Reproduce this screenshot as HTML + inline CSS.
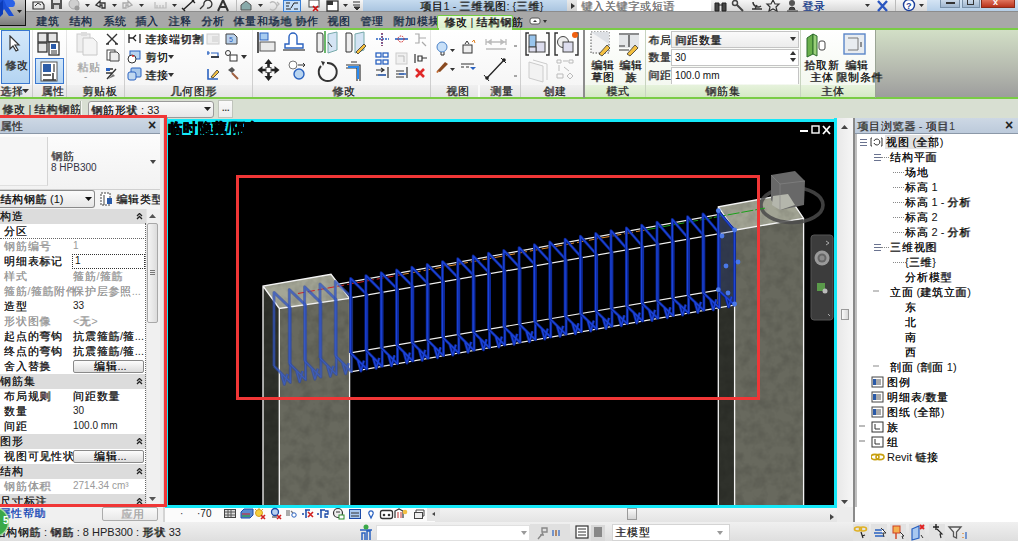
<!DOCTYPE html>
<html><head><meta charset="utf-8">
<style>
*{box-sizing:border-box;margin:0;padding:0}
html,body{width:1018px;height:541px;overflow:hidden;background:#d4d4d4;font-family:"Liberation Sans",sans-serif;font-size:11px;color:#1a1a1a;position:relative}
.a{position:absolute}
.t{position:absolute;white-space:nowrap;line-height:1}
.c{letter-spacing:.75px;text-shadow:.6px .4px 0 currentColor}
.l .c{text-shadow:.4px .3px 0 currentColor}
</style></head><body>
<div class="a" style="left:0px;top:0px;width:363px;height:12px;background:linear-gradient(#f7f7f7,#d6d6d6)"></div>
<div class="a" style="left:363px;top:0px;width:204px;height:12px;background:linear-gradient(#c6dbef,#a8c3df)"></div>
<div class="a" style="left:567px;top:0px;width:10px;height:12px;background:linear-gradient(#eaeaea,#cfcfcf)"></div>
<div class="a" style="left:577px;top:0px;width:134px;height:12px;background:#fff;border-bottom:1px solid #9a9a9a"></div>
<div class="a" style="left:711px;top:0px;width:217px;height:12px;background:linear-gradient(#f6f6f6,#d6d6d6)"></div>
<div class="a" style="left:927px;top:0px;width:91px;height:12px;background:linear-gradient(#d4e4f4,#b2cce6)"></div>
<div class="a" style="left:0px;top:11px;width:1018px;height:1px;background:#8c8c8c"></div>
<div class="t" style="left:420px;top:1px;font-size:11px;color:#222;"><span class="c">项目</span>1 - <span class="c">三维视图</span>: {<span class="c">三维</span>}</div>
<svg class="a" style="left:569px;top:2px;" width="8" height="8" viewBox="0 0 8 8"><path d="M2 1l4 3-4 3z" fill="#333"/></svg>
<div class="t" style="left:581px;top:1px;font-size:11px;color:#777;"><span class="c">键入关键字或短语</span></div>
<div class="a" style="left:940px;top:0px;width:20px;height:8px;background:linear-gradient(#c9d8e8,#9fb6cf);border:1px solid #7890a8;border-top:0"></div>
<div class="a" style="left:962px;top:0px;width:18px;height:8px;background:linear-gradient(#c9d8e8,#9fb6cf);border:1px solid #7890a8;border-top:0"></div>
<div class="a" style="left:981px;top:0px;width:34px;height:8px;background:linear-gradient(#e0735c,#b8321c);border:1px solid #8a2a18;border-top:0"></div>
<div class="a" style="left:946px;top:2px;width:9px;height:2px;background:#333"></div>
<div class="a" style="left:967px;top:0px;width:7px;height:5px;border:1px solid #333;border-top:0"></div>
<div class="t" style="left:993px;top:-2px;font-size:9px;color:#fff;font-weight:bold">x</div>
<svg class="a" style="left:0px;top:0px;" width="363" height="12" viewBox="0 0 363 12"><path d="M33 2h9l2 3v4h-11z" fill="none" stroke="#333" stroke-width="1.2"/><path d="M35 6l3-3 3 2" stroke="#333" fill="none"/><rect x="51" y="0" width="11" height="9" fill="#555"/><rect x="53" y="0" width="7" height="3" fill="#ddd"/><rect x="54" y="5" width="5" height="4" fill="#ccc"/><circle cx="74" cy="4" r="5" fill="#cfcfcf" stroke="#aaa"/><circle cx="77" cy="8" r="2.5" fill="#999"/><path d="M96 5l4-4v2h5v5h-3v-3h-2v2z" fill="none" stroke="#333" stroke-width="1.3"/><path d="M132 5l-4-4v2h-5v5h3v-3h2v2z" fill="none" stroke="#aaa" stroke-width="1.3"/><path d="M155 2v6h11v-6M157 8v-3M160 8v-3M163 8v-3" fill="none" stroke="#bbb" stroke-width="1.2"/><path d="M183 10l11-10M182 8l3 3M192 0l3 3" fill="none" stroke="#222" stroke-width="1.4"/><path d="M200 9l4-4M204 5a4 4 0 1 1 3 3" fill="none" stroke="#333" stroke-width="1.3"/><path d="M218 11l5-11 5 11M220 7h6" fill="none" stroke="#333" stroke-width="2"/><rect x="236" y="0" width="1" height="11" fill="#bbb"/><path d="M241 5l5-4 5 4v5h-10z" fill="#8aa" stroke="#555"/><path d="M270 3a4 4 0 1 1 0 6M277 2l2 2-2 2" fill="none" stroke="#bbb" stroke-width="1.3"/><rect x="283.5" y="0.5" width="17" height="11" fill="#c6def6" stroke="#3b7fd4"/><path d="M286 3h4M286 6h3M286 9h5M291 8l3-5h4M294 9h4" stroke="#222" fill="none"/><rect x="309" y="0" width="10" height="7" fill="#fff" stroke="#444"/><path d="M313 6l5 5M318 6l-5 5" stroke="#d01010" stroke-width="1.6"/><rect x="327" y="1" width="11" height="10" fill="#fff" stroke="#333" stroke-width="1.3"/><rect x="327" y="1" width="6" height="4" fill="#333"/><path d="M353 2h7M353 5h7M354 7l3 3 3-3z" fill="#333" stroke="#333"/><path d="M85 4h5l-2.5 3z" fill="#333"/><path d="M112 4h5l-2.5 3z" fill="#333"/><path d="M139 4h5l-2.5 3z" fill="#333"/><path d="M172 4h5l-2.5 3z" fill="#333"/><path d="M258 4h5l-2.5 3z" fill="#333"/><path d="M343 4h5l-2.5 3z" fill="#333"/></svg>
<svg class="a" style="left:0px;top:0px;" width="1018" height="12" viewBox="0 0 1018 12"><path d="M715 3h4v8h-4zM722 3h4v8h-4zM718 5h5" fill="#444" stroke="#222"/><circle cx="735" cy="3" r="2.5" fill="none" stroke="#444" stroke-width="1.5"/><path d="M737 5l6 6" stroke="#444" stroke-width="2"/><path d="M752 9h10M755 9l2-4M753 2a5 5 0 0 0 8 4" fill="none" stroke="#333" stroke-width="1.4"/><path d="M773 0l2 4h4l-3 3 1 4-4-2-4 2 1-4-3-3h4z" fill="none" stroke="#333" stroke-width="1.2"/><circle cx="792" cy="3" r="3" fill="#555"/><path d="M787 11h11M789 10a3 3 0 0 1 6 0" fill="#444" stroke="#333"/><path d="M865 4h5l-2.5 3zM919 4h5l-2.5 3z" fill="#333"/><path d="M878 1l9 10M887 1l-9 10" stroke="#2b56c0" stroke-width="2.4"/><rect x="895" y="0" width="1" height="11" fill="#bbb"/><circle cx="909" cy="5" r="5.5" fill="#fff" stroke="#1c3f9a" stroke-width="1.4"/><text x="906" y="9" font-size="9" font-weight="bold" fill="#1c3f9a" font-family="Liberation Sans">?</text></svg>
<div class="t" style="left:802px;top:1px;font-size:11px;color:#1d3f8a;"><span class="c">登录</span></div>
<div class="a" style="left:0px;top:12px;width:1018px;height:16px;background:#a8a8a8"></div>
<div class="t" style="left:36px;top:16px;font-size:11px;color:#20304a;"><span class="c">建筑</span></div>
<div class="t" style="left:69px;top:16px;font-size:11px;color:#20304a;"><span class="c">结构</span></div>
<div class="t" style="left:103px;top:16px;font-size:11px;color:#20304a;"><span class="c">系统</span></div>
<div class="t" style="left:135px;top:16px;font-size:11px;color:#20304a;"><span class="c">插入</span></div>
<div class="t" style="left:168px;top:16px;font-size:11px;color:#20304a;"><span class="c">注释</span></div>
<div class="t" style="left:201px;top:16px;font-size:11px;color:#20304a;"><span class="c">分析</span></div>
<div class="t" style="left:233px;top:16px;font-size:11px;color:#20304a;"><span class="c">体量和场地</span></div>
<div class="t" style="left:295px;top:16px;font-size:11px;color:#20304a;"><span class="c">协作</span></div>
<div class="t" style="left:327px;top:16px;font-size:11px;color:#20304a;"><span class="c">视图</span></div>
<div class="t" style="left:360px;top:16px;font-size:11px;color:#20304a;"><span class="c">管理</span></div>
<div class="t" style="left:393px;top:16px;font-size:11px;color:#20304a;"><span class="c">附加模块</span></div>
<div class="a" style="left:437px;top:15px;width:76px;height:14px;background:linear-gradient(#eef8e6,#daf0ca);border:1.5px solid #72d040;border-bottom:0;border-radius:2px 2px 0 0"></div>
<div class="t" style="left:444px;top:17px;font-size:11px;color:#1a1a1a;"><span class="c">修改</span> | <span class="c">结构钢筋</span></div>
<svg class="a" style="left:528px;top:15px;" width="20" height="12" viewBox="0 0 20 12"><rect x="2" y="3" width="10" height="6" rx="2" fill="#fff" stroke="#555"/><path d="M5 7l2-2 2 2z" fill="#333"/><path d="M15 5h4l-2 3z" fill="#333"/></svg>
<div class="a" style="left:0px;top:0px;width:26px;height:26px;background:linear-gradient(#c8c8c8,#a0a0a0 60%,#7c7c7c);border-right:1.5px solid #111;border-bottom:1.5px solid #111"></div>
<svg class="a" style="left:0px;top:0px;" width="25" height="25" viewBox="0 0 25 25"><path d="M0 0h9l-2 5 7 11h-5l-5-7-2 4h-2z" fill="#1a4fd6"/><path d="M4 0h9a4 4 0 0 1 0 7h-6" fill="#2a62e8"/><path d="M0 3l3-3v14l-3 3z" fill="#0c3cb8"/><path d="M17 10h5l-2.5 3z" fill="#222"/></svg>
<div class="a" style="left:0px;top:28px;width:1018px;height:2px;background:#79cc45"></div>
<div class="a" style="left:438.5px;top:28px;width:73px;height:2px;background:#e2f4d6"></div>
<div class="a" style="left:0px;top:30px;width:584px;height:55px;background:linear-gradient(#ffffff,#f6f6f6)"></div>
<div class="a" style="left:584px;top:30px;width:292px;height:55px;background:linear-gradient(#ffffff,#f4f8f0)"></div>
<div class="a" style="left:0px;top:85px;width:584px;height:13px;background:linear-gradient(#f0f0f0,#e4e4e4)"></div>
<div class="a" style="left:584px;top:85px;width:292px;height:13px;background:linear-gradient(#e6f2dc,#d4e8c4)"></div>
<div class="a" style="left:876px;top:30px;width:142px;height:68px;background:linear-gradient(#d2dfc6,#b4b8ae 60%,#9c9c9c)"></div>
<div class="a" style="left:0px;top:97px;width:1018px;height:2px;background:#79cc45"></div>
<div class="a" style="left:32px;top:30px;width:1px;height:67px;background:linear-gradient(#e8e8e8,#c8c8c8)"></div>
<div class="a" style="left:66px;top:30px;width:1px;height:67px;background:linear-gradient(#e8e8e8,#c8c8c8)"></div>
<div class="a" style="left:124px;top:30px;width:1px;height:67px;background:linear-gradient(#e8e8e8,#c8c8c8)"></div>
<div class="a" style="left:252px;top:30px;width:1px;height:67px;background:linear-gradient(#e8e8e8,#c8c8c8)"></div>
<div class="a" style="left:430px;top:30px;width:1px;height:67px;background:linear-gradient(#e8e8e8,#c8c8c8)"></div>
<div class="a" style="left:520px;top:30px;width:1px;height:67px;background:linear-gradient(#e8e8e8,#c8c8c8)"></div>
<div class="a" style="left:478px;top:85px;width:2px;height:12px;background:#fafafa"></div>
<div class="a" style="left:583px;top:30px;width:2px;height:68px;background:#8c8c8c"></div>
<div class="a" style="left:645px;top:30px;width:1px;height:67px;background:#c8d4c0"></div>
<div class="a" style="left:800px;top:30px;width:1px;height:67px;background:#c8d4c0"></div>
<div class="a" style="left:875px;top:30px;width:1px;height:68px;background:#9aa494"></div>
<div class="t" style="left:0px;top:86px;font-size:11px;color:#333;"><span class="c">选择</span></div>
<div class="t" style="left:41px;top:86px;font-size:11px;color:#333;"><span class="c">属性</span></div>
<div class="t" style="left:82px;top:86px;font-size:11px;color:#333;"><span class="c">剪贴板</span></div>
<div class="t" style="left:170px;top:86px;font-size:11px;color:#333;"><span class="c">几何图形</span></div>
<div class="t" style="left:332px;top:86px;font-size:11px;color:#333;"><span class="c">修改</span></div>
<div class="t" style="left:446px;top:86px;font-size:11px;color:#333;"><span class="c">视图</span></div>
<div class="t" style="left:490px;top:86px;font-size:11px;color:#333;"><span class="c">测量</span></div>
<div class="t" style="left:543px;top:86px;font-size:11px;color:#333;"><span class="c">创建</span></div>
<div class="t" style="left:606px;top:86px;font-size:11px;color:#333;"><span class="c">模式</span></div>
<div class="t" style="left:705px;top:86px;font-size:11px;color:#333;"><span class="c">钢筋集</span></div>
<div class="t" style="left:821px;top:86px;font-size:11px;color:#333;"><span class="c">主体</span></div>
<svg class="a" style="left:22px;top:89px;" width="8" height="5" viewBox="0 0 8 5"><path d="M0 0h7l-3.5 4z" fill="#333"/></svg>
<div class="a" style="left:1px;top:30px;width:29px;height:54px;background:linear-gradient(#d4e8fa,#b4d4f2);border:1px solid #3a78d0"></div>
<svg class="a" style="left:9px;top:35px;" width="12" height="17" viewBox="0 0 12 17"><path d="M1 1v13l3-3 3 5 2-1-3-5h4z" fill="#fff" stroke="#333" stroke-width="1.2"/></svg>
<div class="t" style="left:5px;top:60px;font-size:11px;color:#333;"><span class="c">修改</span></div>
<svg class="a" style="left:36px;top:31px;" width="26" height="25" viewBox="0 0 26 25"><rect x="2" y="2" width="9" height="9" fill="#e4e4e4" stroke="#333" stroke-width="1.3"/><rect x="12" y="2" width="9" height="9" fill="#e4e4e4" stroke="#333" stroke-width="1.3"/><rect x="2" y="12" width="9" height="9" fill="#e4e4e4" stroke="#333" stroke-width="1.3"/><rect x="13" y="11" width="10" height="13" fill="#fff" stroke="#333" stroke-width="1.3"/><rect x="15" y="13" width="5" height="5" fill="#2a5aa8"/><path d="M15 20h6M15 22h6" stroke="#333"/></svg>
<div class="a" style="left:35px;top:58px;width:29px;height:26px;background:linear-gradient(#d4e8fa,#b4d4f2);border:1px solid #3a78d0"></div>
<svg class="a" style="left:40px;top:61px;" width="20" height="21" viewBox="0 0 20 21"><rect x="1" y="1" width="16" height="19" fill="#fff" stroke="#555"/><rect x="3" y="3" width="8" height="8" fill="#2d5da8"/><rect x="13" y="3" width="2" height="8" fill="#888"/><path d="M3 14h8M13 12v7M3 19h13" stroke="#333" stroke-width="1.5"/></svg>
<svg class="a" style="left:74px;top:31px;" width="26" height="26" viewBox="0 0 26 26"><rect x="3" y="3" width="13" height="18" fill="#eee" stroke="#ccc"/><path d="M9 7h10l4 4v13h-14z" fill="#f4f4f4" stroke="#c8c8c8"/><rect x="7" y="1" width="6" height="4" fill="#ddd"/></svg>
<div class="t" style="left:77px;top:62px;font-size:11px;color:#aaa;"><span class="c">粘贴</span></div>
<div class="t" style="left:84px;top:72px;font-size:10px;color:#999;">-</div>
<svg class="a" style="left:104px;top:32px;" width="18" height="50" viewBox="0 0 18 50"><path d="M3 2l10 10M13 2l-10 10M2 12h3M11 12h3" stroke="#333" stroke-width="1.4"/><rect x="3" y="18" width="8" height="10" fill="#fff" stroke="#444"/><path d="M6 20h7l2 2v7h-9z" fill="#eee" stroke="#444"/><path d="M2 37h7M2 41h6M3 47l9-10" stroke="#333" stroke-width="1.3"/><path d="M4 47l5-5 2 2z" fill="#777"/><path d="M2 36h4v3h-4z" fill="#2a62c0"/></svg>
<svg class="a" style="left:127px;top:32px;" width="16" height="50" viewBox="0 0 16 50"><path d="M2 2v9M13 2v9M2 6h4l3 3M9 3l-3 3" stroke="#222" stroke-width="1.3" fill="none"/><rect x="3" y="19" width="10" height="8" fill="#b8d4f0" stroke="#2a62c0"/><circle cx="5" cy="27" r="4" fill="#fff" stroke="#333"/><circle cx="6" cy="24" r="1" fill="#e02020"/><rect x="4" y="36" width="10" height="9" fill="#a8c8ea" stroke="#2a62c0" rx="1"/><rect x="1" y="40" width="8" height="8" fill="#c0d8f0" stroke="#2a62c0" rx="2"/></svg>
<div class="t" style="left:145px;top:34px;font-size:11px;color:#202020;"><span class="c">连接端切割</span></div>
<div class="t" style="left:145px;top:52px;font-size:11px;color:#202020;"><span class="c">剪切</span></div>
<div class="t" style="left:145px;top:70px;font-size:11px;color:#202020;"><span class="c">连接</span></div>
<svg class="a" style="left:195px;top:37px;" width="7" height="5" viewBox="0 0 7 5"><path d="M0 0h6l-3 4z" fill="#333"/></svg>
<svg class="a" style="left:168px;top:55px;" width="7" height="5" viewBox="0 0 7 5"><path d="M0 0h6l-3 4z" fill="#333"/></svg>
<svg class="a" style="left:168px;top:73px;" width="7" height="5" viewBox="0 0 7 5"><path d="M0 0h6l-3 4z" fill="#333"/></svg>
<svg class="a" style="left:241px;top:55px;" width="7" height="5" viewBox="0 0 7 5"><path d="M0 0h6l-3 4z" fill="#333"/></svg>
<svg class="a" style="left:204px;top:32px;" width="36" height="50" viewBox="0 0 36 50"><rect x="3" y="2" width="12" height="10" fill="#eee" stroke="#ccc"/><rect x="8" y="4" width="6" height="6" fill="#ddd"/><path d="M22 2h8l3 3v7h-11z" fill="#b8d0ea" stroke="#444"/><text x="25" y="10" font-size="7" fill="#2a62c0" font-family="Liberation Sans">5</text><path d="M3 21h3M4 19v4M7 21h7v4h-7" stroke="#2a62c0" stroke-width="1.2" fill="none"/><path d="M7 25h8" stroke="#222" stroke-width="1.6"/><circle cx="24" cy="21" r="2.5" fill="none" stroke="#333"/><rect x="26" y="23" width="7" height="6" fill="#fff" stroke="#333"/><path d="M4 37v10h10" stroke="#2a62c0" stroke-width="1.6" fill="none"/><path d="M7 45l6-7 2 2-6 6z" fill="#f4c040" stroke="#333" stroke-width=".8"/><path d="M24 38l4-3 3 3-3 3z" fill="#555"/><path d="M28 41l6 6" stroke="#a06040" stroke-width="2"/></svg>
<svg class="a" style="left:252px;top:30px;" width="178" height="54" viewBox="0 0 178 54"><path d="M6 2v21" stroke="#111" stroke-width="1.4"/><rect x="8" y="3" width="8" height="7" fill="#a8ccf0" stroke="#2a62c0"/><rect x="8" y="12" width="15" height="9" fill="#eaeaea" stroke="#555"/><path d="M33 18v-4h4v-7a4 4 0 0 1 8 0v7h6v4z" fill="#fff" stroke="#2a62c0" stroke-width="1.4"/><path d="M31 20h22" stroke="#333" stroke-width="1.2"/><path d="M65 3h4a2 2 0 0 1 2 2v15a2 2 0 0 1-2 2h-4z" fill="#eee" stroke="#333"/><path d="M73 1v22" stroke="#2a9a2a" stroke-width="1.4"/><path d="M76 4l9-2v18l-9 3z" fill="#d4e4f4" stroke="#7aa"/><path d="M76 12l4 5" stroke="#333"/><path d="M94 3h4a2 2 0 0 1 2 2v15a2 2 0 0 1-2 2h-4z" fill="#eee" stroke="#333"/><path d="M103 4l9-2v18l-9 3z" fill="#d4e4f4" stroke="#7aa"/><path d="M104 22l8-8 2 2-8 8z" fill="#f4c040" stroke="#333" stroke-width=".8"/><path d="M16.5 33v5M16.5 42v5M9 40h5M19 40h5" stroke="#222" stroke-width="2.6"/><path d="M16.5 29l-4 5h8zM16.5 51l-4-5h8zM5.5 40l5-4v8zM27.5 40l-5-4v8z" fill="#222"/><rect x="14" y="37.5" width="5" height="5" fill="#fff" stroke="#555"/><circle cx="41" cy="35" r="4" fill="#fff" stroke="#777"/><path d="M46 35h7M51 33l2 2-2 2" stroke="#333" fill="none"/><ellipse cx="47" cy="44" rx="5" ry="5" fill="#b8d4f0" stroke="#2a62c0" stroke-width="1.4"/><path d="M75 33a9 9 0 1 1-6 3" fill="none" stroke="#333" stroke-width="2"/><path d="M69 31l4 1-2 4z" fill="#333"/><path d="M94 35h14v16M94 38h11v13M99 32h6" stroke="#333" stroke-width="1.2" fill="none"/><path d="M96 37h10v12" stroke="#2a8af0" stroke-width="2" fill="none"/><path d="M124 9h13M130 3v13" stroke="#2a62c0" stroke-width="1.6" stroke-dasharray="2 1"/><path d="M130 3v13" stroke="#d02020" stroke-dasharray="1.5 1.5"/><path d="M143 9h13" stroke="#2a62c0" stroke-width="1.6"/><circle cx="149" cy="9" r="3" fill="none" stroke="#d02020" stroke-dasharray="1.5 1"/><path d="M163 4h4v9h-4M167 8h7M170 12l4 4" stroke="#aaa" stroke-width="1.2" fill="none"/><rect x="124" y="23" width="5" height="4" fill="none" stroke="#2a62c0" stroke-width="1.3"/><rect x="131" y="23" width="5" height="4" fill="none" stroke="#2a62c0" stroke-width="1.3"/><rect x="124" y="30" width="5" height="4" fill="none" stroke="#2a62c0" stroke-width="1.3"/><rect x="131" y="30" width="5" height="4" fill="none" stroke="#2a62c0" stroke-width="1.3"/><rect x="144" y="23" width="11" height="11" fill="#f0f0f0" stroke="#ccc"/><path d="M146 26h6v6" stroke="#bbb" fill="none"/><path d="M163 24v9M166 26h4v5h-4zM170 28h5" stroke="#333" stroke-width="1.2" fill="none"/><path d="M124 40h8M129 38l3 2-3 2M124 45h10M136 37v11" stroke="#333" stroke-width="1.2" fill="none"/><path d="M126 45h8" stroke="#2a62c0" stroke-width="1.4"/><path d="M144 41h8M144 44h8M144 47h8M155 37v11" stroke="#333" stroke-width="1.2" fill="none"/><path d="M147 44h7" stroke="#2a62c0" stroke-width="1.4"/><path d="M164 39l8 8M172 39l-8 8" stroke="#e02828" stroke-width="2.6"/></svg>
<svg class="a" style="left:430px;top:30px;" width="50" height="54" viewBox="0 0 50 54"><circle cx="12" cy="17" r="5" fill="#c8e0f8" stroke="#4a82c8"/><path d="M11 22v3h3v-3" stroke="#333" fill="none"/><path d="M20 19h5l-2.5 3zM20 38h5l-2.5 3z" fill="#333"/><rect x="33" y="15" width="9" height="8" fill="#eee" stroke="#333"/><path d="M35 14l2-3 2 3" stroke="#333" fill="none"/><path d="M42 12l2-2 1 3" stroke="#e08020" fill="none"/><path d="M7 41l8-9 3 2-8 8z" fill="#8a4a20"/><path d="M6 42l3-2-1 3z" fill="#c06020"/><path d="M31 34h13M31 37h3M36 37h3" stroke="#333" stroke-width="1.2"/><path d="M40 37l3 3 3-3z" fill="#2a62c0"/></svg>
<svg class="a" style="left:478px;top:30px;" width="42" height="54" viewBox="0 0 42 54"><path d="M8 12h20M8 9v6M28 9v6M10 12l3-2v4zM26 12l-3-2v4z" stroke="#bbb" stroke-width="1.3" fill="#bbb"/><rect x="8" y="18" width="20" height="2" fill="#ccc"/><path d="M36 16h3M36 46h3" stroke="#555"/><path d="M9 48l17-18" stroke="#222" stroke-width="1.3"/><circle cx="9" cy="48" r="1.8" fill="#222"/><circle cx="26" cy="30" r="1.8" fill="#222"/><path d="M6 45l5 6M23 28l5 5" stroke="#222"/></svg>
<svg class="a" style="left:520px;top:30px;" width="64" height="54" viewBox="0 0 64 54"><path d="M9 3h-3v22h3M26 3h3v22h-3M38 3h-3v22h3M55 3h3v22h-3" stroke="#333" stroke-width="1.4" fill="none"/><rect x="9" y="5" width="7" height="12" fill="#98c4ec" stroke="#444"/><rect x="16" y="12" width="9" height="10" fill="#dde" stroke="#444"/><rect x="9" y="17" width="7" height="5" fill="#dde" stroke="#444"/><circle cx="43" cy="12" r="5.5" fill="#eee" stroke="#444"/><rect x="43" y="12" width="10" height="10" fill="#dde" stroke="#444"/><circle cx="55" cy="5" r="3" fill="#f06010"/><path d="M9 32l14 4v16l-14-4z" fill="#f2f2f2" stroke="#ccc"/><path d="M13 30l14 4v16" fill="none" stroke="#ccc"/><path d="M37 30h4v3h-4zM49 30h4v3h-4zM37 44h6v4h-6zM43 31h5M39 35v6M44 37l5 4" stroke="#bbb" fill="none"/><path d="M50 43l3 3-3 3-3-3z" fill="none" stroke="#bbb"/></svg>
<svg class="a" style="left:585px;top:30px;" width="60" height="30" viewBox="0 0 60 30"><rect x="6" y="2" width="18" height="21" fill="#f4f4f4" stroke="#555" stroke-dasharray="1.5 1.5"/><path d="M6 2h18v12" fill="#dde0e4"/><path d="M14 24l8-9 3 3-8 8z" fill="#f4c040" stroke="#333" stroke-width=".8"/><rect x="34" y="3" width="20" height="15" fill="#e4e6e8"/><path d="M34 4h20M34 16h6M34 20h10M44 5v12" stroke="#333" stroke-width="1.2"/><path d="M42 24l8-9 3 3-8 8z" fill="#f4c040" stroke="#333" stroke-width=".8"/></svg>
<div class="t" style="left:591px;top:60px;font-size:11px;color:#202020;"><span class="c">编辑</span></div>
<div class="t" style="left:591px;top:72px;font-size:11px;color:#202020;"><span class="c">草图</span></div>
<div class="t" style="left:619px;top:60px;font-size:11px;color:#202020;"><span class="c">编辑</span></div>
<div class="t" style="left:625px;top:72px;font-size:11px;color:#202020;"><span class="c">族</span></div>
<div class="t" style="left:648px;top:35px;font-size:11px;color:#333;"><span class="c">布局</span>:</div>
<div class="t" style="left:648px;top:52px;font-size:11px;color:#333;"><span class="c">数量</span>:</div>
<div class="t" style="left:648px;top:70px;font-size:11px;color:#333;"><span class="c">间距</span>:</div>
<div class="a" style="left:671px;top:31px;width:128px;height:17px;background:linear-gradient(#fafafa,#ececec);border:1px solid #c4c4c4"></div>
<div class="t" style="left:675px;top:35px;font-size:11px;color:#202020;"><span class="c">间距数量</span></div>
<svg class="a" style="left:790px;top:37px;" width="7" height="5" viewBox="0 0 7 5"><path d="M0 0h6l-3 4z" fill="#333"/></svg>
<div class="a" style="left:671px;top:49px;width:128px;height:17px;background:#fff;border:1px solid #c4c4c4"></div>
<div class="t" style="left:675px;top:53px;font-size:10px;color:#111;">30</div>
<svg class="a" style="left:789px;top:50px;" width="9" height="14" viewBox="0 0 9 14"><path d="M1 5h6l-3-4zM1 8h6l-3 4z" fill="#333"/></svg>
<div class="a" style="left:671px;top:67px;width:128px;height:17px;background:#fff;border:1px solid #c4c4c4;border-bottom:0"></div>
<div class="t" style="left:675px;top:71px;font-size:10px;color:#111;">100.0 mm</div>
<svg class="a" style="left:803px;top:30px;" width="72" height="30" viewBox="0 0 72 30"><path d="M4 8l6-4v20l-6 3z" fill="#6ab04c" stroke="#2a6a2a"/><path d="M10 4l4 2v20l-4-2z" fill="#9ad07a" stroke="#2a6a2a"/><rect x="16" y="11" width="6" height="9" rx="2" fill="#fff" stroke="#444"/><rect x="41" y="4" width="21" height="20" fill="#e8ecf0" stroke="#5a86c8" stroke-width="1.4"/><path d="M45 8l10 0v12h-10" fill="none" stroke="#777"/><path d="M58 12v5" stroke="#333"/></svg>
<div class="t" style="left:804px;top:60px;font-size:11px;color:#202020;"><span class="c">拾取新</span></div>
<div class="t" style="left:810px;top:72px;font-size:11px;color:#202020;"><span class="c">主体</span></div>
<div class="t" style="left:845px;top:60px;font-size:11px;color:#202020;"><span class="c">编辑</span></div>
<div class="t" style="left:836px;top:72px;font-size:11px;color:#202020;"><span class="c">限制条件</span></div>
<div class="a" style="left:0px;top:99px;width:1018px;height:20px;background:#d8dfd2"></div>
<div class="t" style="left:2px;top:104px;font-size:11px;color:#2a2a2a;"><span class="c">修改</span> | <span class="c">结构钢筋</span></div>
<div class="a" style="left:80px;top:101px;width:1px;height:15px;background:#a8b0a4"></div>
<div class="a" style="left:81px;top:101px;width:1px;height:15px;background:#f4f6f2"></div>
<div class="a" style="left:88px;top:101px;width:126px;height:17px;background:linear-gradient(#fafafa,#e6e6e6);border:1px solid #9a9a9a;border-radius:3px"></div>
<div class="t" style="left:91px;top:105px;font-size:11px;color:#222;"><span class="c">钢筋形状</span> : 33</div>
<svg class="a" style="left:204px;top:107px;" width="8" height="5" viewBox="0 0 8 5"><path d="M0 0h7l-3.5 4z" fill="#222"/></svg>
<div class="a" style="left:218px;top:100px;width:15px;height:18px;background:linear-gradient(#fafafa,#ececec);border:1px solid #c0c4bc"></div>
<div class="t" style="left:222px;top:104px;font-size:9px;color:#333;font-weight:bold">...</div>
<div class="a" style="left:0px;top:118px;width:163px;height:404px;background:#f4f4f4"></div>
<div class="a" style="left:0px;top:118px;width:160px;height:15px;background:linear-gradient(#cdd8e4,#bccadb)"></div>
<div class="a" style="left:0px;top:133px;width:160px;height:1px;background:#8b98a8"></div>
<div class="t" style="left:0px;top:121px;font-size:11px;color:#3a3a3a;"><span class="c">属性</span></div>
<div class="t" style="left:148px;top:118px;font-size:14px;color:#222;font-weight:bold">&#215;</div>
<div class="a" style="left:0px;top:134px;width:160px;height:56px;background:linear-gradient(#fcfcfc,#f2f2f2);border-bottom:1px solid #d0d0d0"></div>
<div class="a" style="left:0px;top:137px;width:48px;height:49px;background:#f6f6f6;border-right:1px solid #d4d4d4;border-bottom:1px solid #e0e0e0"></div>
<div class="t" style="left:51px;top:151px;font-size:11px;color:#444;"><span class="c">钢筋</span></div>
<div class="t" style="left:51px;top:163px;font-size:10px;color:#334;">8 HPB300</div>
<svg class="a" style="left:150px;top:160px;" width="7" height="4" viewBox="0 0 7 4"><path d="M0 0h6l-3 4z" fill="#444"/></svg>
<div class="a" style="left:0px;top:190px;width:95px;height:18px;background:linear-gradient(#fbfbfb,#e6e6e6);border:1px solid #8a8a8a;border-left:0;border-radius:0 3px 3px 0"></div>
<div class="t" style="left:0px;top:194px;font-size:11px;color:#111;"><span class="c">结构钢筋</span> (1)</div>
<svg class="a" style="left:85px;top:197px;" width="8" height="5" viewBox="0 0 8 5"><path d="M0 0h7l-3.5 4z" fill="#111"/></svg>
<svg class="a" style="left:100px;top:191px;" width="14" height="16" viewBox="0 0 14 16"><rect x="1" y="2" width="9" height="12" fill="#fff" stroke="#444" stroke-dasharray="2 1"/><path d="M4 4v10" stroke="#444"/><rect x="7" y="7" width="5" height="6" fill="#2a5aa8"/></svg>
<div class="t" style="left:116px;top:194px;font-size:11px;color:#222;"><span class="c">编辑类型</span></div>
<div class="l">
<div class="a" style="left:0px;top:209px;width:146px;height:296px;background:#fff"></div>
<div class="a" style="left:0px;top:209px;width:146px;height:15px;background:#dcdcdc"></div>
<div class="t" style="left:0px;top:211px;font-size:11px;color:#222;"><span class="c">构造</span></div>
<svg class="a" style="left:136px;top:213px;" width="7" height="7" viewBox="0 0 7 7"><path d="M1 3l2.5-2.5 2.5 2.5M1 6l2.5-2.5 2.5 2.5" stroke="#222" fill="none" stroke-width="1.3"/></svg>
<div class="t" style="left:4px;top:226px;font-size:11px;color:#222;"><span class="c">分区</span></div>
<div class="t" style="left:73px;top:226px;font-size:11px;color:#222;"></div>
<div class="t" style="left:4px;top:241px;font-size:11px;color:#9a9a9a;"><span class="c">钢筋编号</span></div>
<div class="t" style="left:73px;top:241px;font-size:10px;color:#9a9a9a;">1</div>
<div class="t" style="left:4px;top:256px;font-size:11px;color:#222;"><span class="c">明细表标记</span></div>
<div class="a" style="left:72px;top:254px;width:73px;height:15px;border:1px dotted #333;background:#fff"></div>
<div class="t" style="left:75px;top:256px;font-size:10px;color:#111;">1</div>
<div class="t" style="left:4px;top:271px;font-size:11px;color:#9a9a9a;"><span class="c">样式</span></div>
<div class="t" style="left:73px;top:271px;font-size:11px;color:#9a9a9a;"><span class="c">箍筋</span>/<span class="c">箍筋</span></div>
<div class="t" style="left:4px;top:286px;font-size:11px;color:#9a9a9a;"><span class="c">箍筋</span>/<span class="c">箍筋附件</span></div>
<div class="t" style="left:73px;top:286px;font-size:11px;color:#9a9a9a;"><span class="c">保护层参照</span>...</div>
<div class="t" style="left:4px;top:301px;font-size:11px;color:#222;"><span class="c">造型</span></div>
<div class="t" style="left:73px;top:301px;font-size:10px;color:#222;">33</div>
<div class="t" style="left:4px;top:316px;font-size:11px;color:#9a9a9a;"><span class="c">形状图像</span></div>
<div class="t" style="left:73px;top:316px;font-size:11px;color:#9a9a9a;"><<span class="c">无</span>></div>
<div class="t" style="left:4px;top:331px;font-size:11px;color:#222;"><span class="c">起点的弯钩</span></div>
<div class="t" style="left:73px;top:331px;font-size:11px;color:#222;"><span class="c">抗震箍筋</span>/<span class="c">箍</span>...</div>
<div class="t" style="left:4px;top:346px;font-size:11px;color:#222;"><span class="c">终点的弯钩</span></div>
<div class="t" style="left:73px;top:346px;font-size:11px;color:#222;"><span class="c">抗震箍筋</span>/<span class="c">箍</span>...</div>
<div class="t" style="left:4px;top:361px;font-size:11px;color:#222;"><span class="c">舍入替换</span></div>
<div class="a" style="left:73px;top:360px;width:71px;height:13px;background:linear-gradient(#fdfdfd,#dcdcdc);border:1px solid #8a8a8a;border-radius:2px"></div>
<div class="t" style="left:94px;top:361px;font-size:11px;color:#111;"><span class="c">编辑</span>...</div>
<div class="a" style="left:0px;top:374px;width:146px;height:15px;background:#dcdcdc"></div>
<div class="t" style="left:0px;top:376px;font-size:11px;color:#222;"><span class="c">钢筋集</span></div>
<svg class="a" style="left:136px;top:378px;" width="7" height="7" viewBox="0 0 7 7"><path d="M1 3l2.5-2.5 2.5 2.5M1 6l2.5-2.5 2.5 2.5" stroke="#222" fill="none" stroke-width="1.3"/></svg>
<div class="t" style="left:4px;top:391px;font-size:11px;color:#222;"><span class="c">布局规则</span></div>
<div class="t" style="left:73px;top:391px;font-size:11px;color:#222;"><span class="c">间距数量</span></div>
<div class="t" style="left:4px;top:406px;font-size:11px;color:#222;"><span class="c">数量</span></div>
<div class="t" style="left:73px;top:406px;font-size:10px;color:#222;">30</div>
<div class="t" style="left:4px;top:421px;font-size:11px;color:#222;"><span class="c">间距</span></div>
<div class="t" style="left:73px;top:421px;font-size:10px;color:#222;">100.0 mm</div>
<div class="a" style="left:0px;top:434px;width:146px;height:15px;background:#dcdcdc"></div>
<div class="t" style="left:0px;top:436px;font-size:11px;color:#222;"><span class="c">图形</span></div>
<svg class="a" style="left:136px;top:438px;" width="7" height="7" viewBox="0 0 7 7"><path d="M1 3l2.5-2.5 2.5 2.5M1 6l2.5-2.5 2.5 2.5" stroke="#222" fill="none" stroke-width="1.3"/></svg>
<div class="t" style="left:4px;top:451px;font-size:11px;color:#222;"><span class="c">视图可见性状态</span></div>
<div class="a" style="left:73px;top:450px;width:71px;height:13px;background:linear-gradient(#fdfdfd,#dcdcdc);border:1px solid #8a8a8a;border-radius:2px"></div>
<div class="t" style="left:94px;top:451px;font-size:11px;color:#111;"><span class="c">编辑</span>...</div>
<div class="a" style="left:0px;top:464px;width:146px;height:15px;background:#dcdcdc"></div>
<div class="t" style="left:0px;top:466px;font-size:11px;color:#222;"><span class="c">结构</span></div>
<svg class="a" style="left:136px;top:468px;" width="7" height="7" viewBox="0 0 7 7"><path d="M1 3l2.5-2.5 2.5 2.5M1 6l2.5-2.5 2.5 2.5" stroke="#222" fill="none" stroke-width="1.3"/></svg>
<div class="t" style="left:4px;top:481px;font-size:11px;color:#9a9a9a;"><span class="c">钢筋体积</span></div>
<div class="t" style="left:73px;top:481px;font-size:10px;color:#9a9a9a;">2714.34 cm³</div>
<div class="a" style="left:0px;top:494px;width:146px;height:15px;background:#dcdcdc"></div>
<div class="t" style="left:0px;top:496px;font-size:11px;color:#222;"><span class="c">尺寸标注</span></div>
<svg class="a" style="left:136px;top:498px;" width="7" height="7" viewBox="0 0 7 7"><path d="M1 3l2.5-2.5 2.5 2.5M1 6l2.5-2.5 2.5 2.5" stroke="#222" fill="none" stroke-width="1.3"/></svg>
</div>
<div class="a" style="left:0px;top:238px;width:146px;height:1px;border-top:1px dotted #666"></div>
<div class="a" style="left:145px;top:223px;width:1px;height:282px;border-left:1px dotted #666"></div>
<div class="a" style="left:146px;top:209px;width:14px;height:296px;background:#f0f0f0;border-left:1px solid #e4e4e4"></div>
<svg class="a" style="left:148px;top:213px;" width="9" height="6" viewBox="0 0 9 6"><path d="M1 5l3.5-4 3.5 4z" fill="#555"/></svg>
<div class="a" style="left:147px;top:223px;width:11px;height:100px;background:linear-gradient(90deg,#f4f4f4,#dcdcdc);border:1px solid #a8a8a8;border-radius:2px"></div>
<div class="a" style="left:150px;top:270px;width:5px;height:1px;background:#777"></div>
<div class="a" style="left:150px;top:272px;width:5px;height:1px;background:#777"></div>
<div class="a" style="left:150px;top:274px;width:5px;height:1px;background:#777"></div>
<svg class="a" style="left:148px;top:496px;" width="9" height="6" viewBox="0 0 9 6"><path d="M1 1l3.5 4 3.5-4z" fill="#555"/></svg>
<div class="a" style="left:160px;top:118px;width:3px;height:404px;background:#e8e8e8"></div>
<div class="a" style="left:0px;top:507px;width:163px;height:15px;background:#f0f0f0"></div>
<div class="t" style="left:-1px;top:508px;font-size:11px;color:#1f4fb8;"><span class="c">属性帮助</span></div>
<div class="a" style="left:102px;top:507px;width:56px;height:14px;background:linear-gradient(#fafafa,#e8e8e8);border:1px solid #acacac;border-radius:2px"></div>
<div class="t" style="left:121px;top:509px;font-size:11px;color:#aaa;"><span class="c">应用</span></div>
<div class="a" style="left:165px;top:119px;width:672px;height:389px;background:#000"></div>
<svg class="a" style="left:0px;top:0px;pointer-events:none" width="1018" height="541" viewBox="0 0 1018 541"><defs><filter id="cn" x="0" y="0" width="100%" height="100%"><feTurbulence type="fractalNoise" baseFrequency="0.09" numOctaves="3" seed="4"/><feColorMatrix type="matrix" values="0 0 0 0 0  0 0 0 0 0  0 0 0 0 0  0 0 0 -0.9 0.55"/><feComposite in2="SourceGraphic" operator="in"/></filter></defs><polygon points="263.0,286.0 279.3,308.5 279.3,505.0 263.0,505.0" fill="#2f312b"/><polygon points="279.3,308.5 349.6,298.4 349.6,505.0 279.3,505.0" fill="#68695e"/><polygon points="263.0,286.0 331.0,274.3 349.6,298.4 279.3,308.5" fill="#a4a696"/><polygon points="263.0,286.0 279.3,308.5 279.3,505.0 263.0,505.0" fill="#000" filter="url(#cn)" opacity=".3"/><polygon points="279.3,308.5 349.6,298.4 349.6,505.0 279.3,505.0" fill="#000" filter="url(#cn)" opacity=".3"/><polygon points="263.0,286.0 331.0,274.3 349.6,298.4 279.3,308.5" fill="#000" filter="url(#cn)" opacity=".35"/><path d="M263,505V286L331,274.3L349.6,298.4V505M263,286L279.3,308.5L349.6,298.4M279.3,308.5V505" fill="none" stroke="#f4f4f4" stroke-width="1.3"/><polygon points="718.3,206.8 734.6,230.2 734.6,505.0 718.3,505.0" fill="#2f312b"/><polygon points="734.6,230.2 803.6,218.4 803.6,505.0 734.6,505.0" fill="#68695e"/><polygon points="718.3,206.8 787.3,194.3 803.6,218.4 734.6,230.2" fill="#a2a494"/><polygon points="718.3,206.8 734.6,230.2 734.6,505.0 718.3,505.0" fill="#000" filter="url(#cn)" opacity=".3"/><polygon points="734.6,230.2 803.6,218.4 803.6,505.0 734.6,505.0" fill="#000" filter="url(#cn)" opacity=".3"/><polygon points="718.3,206.8 787.3,194.3 803.6,218.4 734.6,230.2" fill="#000" filter="url(#cn)" opacity=".35"/><path d="M718.3,505V206.8L787.3,194.3L803.6,218.4V505M718.3,206.8L734.6,230.2L803.6,218.4M734.6,230.2V505" fill="none" stroke="#f4f4f4" stroke-width="1.3"/><ellipse cx="792" cy="205" rx="31" ry="17.5" fill="none" stroke="#4a4a4a" stroke-width="3.6" opacity=".85"/><polygon points="771,175 795,171 805,181 804,205 780,210 771,200" fill="#686868"/><polygon points="773,196 788,194 795,205 780,210 772,205" fill="#b4b6ac"/><path d="M780 210V184L771,175M780,184L805,181" stroke="#888" fill="none" stroke-width=".6"/><path d="M337,284.4L718,214.7M349,298.2L734,231.2M349,353.2L718,290.1M349,372.2L734,305.2" stroke="#f0f0f0" stroke-width="1.2" fill="none"/><path d="M298,293.5L400,274.9" stroke="#d02020" stroke-width="1" stroke-dasharray="7 3"/><path d="M400,274.9L645,230.0" stroke="#e08a30" stroke-width="1" stroke-dasharray="9 3"/><path d="M645,230.0L765,208.1" stroke="#18a018" stroke-width="1" stroke-dasharray="12 2"/><path d="M274.0,366.0V292.4L290.3,307.9V382.4L274.0,366.0M281.3,374.0L284.3,384.4L287.3,373.9" stroke="#2a48a8" stroke-width="3" fill="none" opacity=".6" stroke-linejoin="round"/><path d="M274.0,366.0V292.4L290.3,307.9V382.4L274.0,366.0M281.3,374.0L284.3,384.4L287.3,373.9" stroke="#3a62d8" stroke-width="1.2" fill="none" opacity=".6" stroke-linejoin="round"/><path d="M289.3,363.4V289.6L305.6,305.2V379.7L289.3,363.4M296.6,371.3L299.6,381.8L302.6,371.2" stroke="#2a48a8" stroke-width="3" fill="none" opacity=".6" stroke-linejoin="round"/><path d="M289.3,363.4V289.6L305.6,305.2V379.7L289.3,363.4M296.6,371.3L299.6,381.8L302.6,371.2" stroke="#3a62d8" stroke-width="1.2" fill="none" opacity=".6" stroke-linejoin="round"/><path d="M304.6,360.8V286.8L320.9,302.6V377.1L304.6,360.8M311.9,368.6L314.9,379.1L317.9,368.6" stroke="#2a48a8" stroke-width="3" fill="none" opacity=".6" stroke-linejoin="round"/><path d="M304.6,360.8V286.8L320.9,302.6V377.1L304.6,360.8M311.9,368.6L314.9,379.1L317.9,368.6" stroke="#3a62d8" stroke-width="1.2" fill="none" opacity=".6" stroke-linejoin="round"/><path d="M320.0,358.1V284.0L336.3,299.9V374.4L320.0,358.1M327.3,366.0L330.3,376.4L333.3,365.9" stroke="#2a48a8" stroke-width="3" fill="none" opacity=".6" stroke-linejoin="round"/><path d="M320.0,358.1V284.0L336.3,299.9V374.4L320.0,358.1M327.3,366.0L330.3,376.4L333.3,365.9" stroke="#3a62d8" stroke-width="1.2" fill="none" opacity=".6" stroke-linejoin="round"/><path d="M335.3,355.5V281.2L351.6,297.2V371.7L335.3,355.5M342.6,363.3L345.6,373.8L348.6,363.2" stroke="#2a48a8" stroke-width="3" fill="none" opacity=".6" stroke-linejoin="round"/><path d="M335.3,355.5V281.2L351.6,297.2V371.7L335.3,355.5M342.6,363.3L345.6,373.8L348.6,363.2" stroke="#3a62d8" stroke-width="1.2" fill="none" opacity=".6" stroke-linejoin="round"/><path d="M350.6,352.9V278.4L366.9,294.6V369.1L350.6,352.9M357.9,360.6L360.9,371.1L363.9,360.6" stroke="#0a2288" stroke-width="2.9" fill="none" stroke-linejoin="round"/><path d="M350.6,352.9V278.4L366.9,294.6V369.1L350.6,352.9M357.9,360.6L360.9,371.1L363.9,360.6" stroke="#1c44d8" stroke-width="1.4" fill="none" stroke-linejoin="round"/><path d="M365.9,350.3V275.6L382.2,291.9V366.4L365.9,350.3M373.2,358.0L376.2,368.4L379.2,357.9" stroke="#0a2288" stroke-width="2.9" fill="none" stroke-linejoin="round"/><path d="M365.9,350.3V275.6L382.2,291.9V366.4L365.9,350.3M373.2,358.0L376.2,368.4L379.2,357.9" stroke="#1c44d8" stroke-width="1.4" fill="none" stroke-linejoin="round"/><path d="M381.2,347.7V272.8L397.5,289.2V363.7L381.2,347.7M388.5,355.3L391.5,365.8L394.5,355.3" stroke="#0a2288" stroke-width="2.9" fill="none" stroke-linejoin="round"/><path d="M381.2,347.7V272.8L397.5,289.2V363.7L381.2,347.7M388.5,355.3L391.5,365.8L394.5,355.3" stroke="#1c44d8" stroke-width="1.4" fill="none" stroke-linejoin="round"/><path d="M396.6,345.0V270.0L412.9,286.6V361.1L396.6,345.0M403.9,352.6L406.9,363.1L409.9,352.6" stroke="#0a2288" stroke-width="2.9" fill="none" stroke-linejoin="round"/><path d="M396.6,345.0V270.0L412.9,286.6V361.1L396.6,345.0M403.9,352.6L406.9,363.1L409.9,352.6" stroke="#1c44d8" stroke-width="1.4" fill="none" stroke-linejoin="round"/><path d="M411.9,342.4V267.2L428.2,283.9V358.4L411.9,342.4M419.2,350.0L422.2,360.4L425.2,349.9" stroke="#0a2288" stroke-width="2.9" fill="none" stroke-linejoin="round"/><path d="M411.9,342.4V267.2L428.2,283.9V358.4L411.9,342.4M419.2,350.0L422.2,360.4L425.2,349.9" stroke="#1c44d8" stroke-width="1.4" fill="none" stroke-linejoin="round"/><path d="M427.2,339.8V264.4L443.5,281.2V355.7L427.2,339.8M434.5,347.3L437.5,357.8L440.5,347.3" stroke="#0a2288" stroke-width="2.9" fill="none" stroke-linejoin="round"/><path d="M427.2,339.8V264.4L443.5,281.2V355.7L427.2,339.8M434.5,347.3L437.5,357.8L440.5,347.3" stroke="#1c44d8" stroke-width="1.4" fill="none" stroke-linejoin="round"/><path d="M442.5,337.2V261.6L458.8,278.6V353.1L442.5,337.2M449.8,344.6L452.8,355.1L455.8,344.6" stroke="#0a2288" stroke-width="2.9" fill="none" stroke-linejoin="round"/><path d="M442.5,337.2V261.6L458.8,278.6V353.1L442.5,337.2M449.8,344.6L452.8,355.1L455.8,344.6" stroke="#1c44d8" stroke-width="1.4" fill="none" stroke-linejoin="round"/><path d="M457.8,334.6V258.8L474.1,275.9V350.4L457.8,334.6M465.1,342.0L468.1,352.4L471.1,341.9" stroke="#0a2288" stroke-width="2.9" fill="none" stroke-linejoin="round"/><path d="M457.8,334.6V258.8L474.1,275.9V350.4L457.8,334.6M465.1,342.0L468.1,352.4L471.1,341.9" stroke="#1c44d8" stroke-width="1.4" fill="none" stroke-linejoin="round"/><path d="M473.2,331.9V256.0L489.5,273.2V347.7L473.2,331.9M480.5,339.3L483.5,349.8L486.5,339.3" stroke="#0a2288" stroke-width="2.9" fill="none" stroke-linejoin="round"/><path d="M473.2,331.9V256.0L489.5,273.2V347.7L473.2,331.9M480.5,339.3L483.5,349.8L486.5,339.3" stroke="#1c44d8" stroke-width="1.4" fill="none" stroke-linejoin="round"/><path d="M488.5,329.3V253.2L504.8,270.6V345.1L488.5,329.3M495.8,336.6L498.8,347.1L501.8,336.6" stroke="#0a2288" stroke-width="2.9" fill="none" stroke-linejoin="round"/><path d="M488.5,329.3V253.2L504.8,270.6V345.1L488.5,329.3M495.8,336.6L498.8,347.1L501.8,336.6" stroke="#1c44d8" stroke-width="1.4" fill="none" stroke-linejoin="round"/><path d="M503.8,326.7V250.4L520.1,267.9V342.4L503.8,326.7M511.1,334.0L514.1,344.4L517.1,333.9" stroke="#0a2288" stroke-width="2.9" fill="none" stroke-linejoin="round"/><path d="M503.8,326.7V250.4L520.1,267.9V342.4L503.8,326.7M511.1,334.0L514.1,344.4L517.1,333.9" stroke="#1c44d8" stroke-width="1.4" fill="none" stroke-linejoin="round"/><path d="M519.1,324.1V247.6L535.4,265.2V339.7L519.1,324.1M526.4,331.3L529.4,341.8L532.4,331.3" stroke="#0a2288" stroke-width="2.9" fill="none" stroke-linejoin="round"/><path d="M519.1,324.1V247.6L535.4,265.2V339.7L519.1,324.1M526.4,331.3L529.4,341.8L532.4,331.3" stroke="#1c44d8" stroke-width="1.4" fill="none" stroke-linejoin="round"/><path d="M534.4,321.5V244.7L550.7,262.6V337.1L534.4,321.5M541.7,328.6L544.7,339.1L547.7,328.6" stroke="#0a2288" stroke-width="2.9" fill="none" stroke-linejoin="round"/><path d="M534.4,321.5V244.7L550.7,262.6V337.1L534.4,321.5M541.7,328.6L544.7,339.1L547.7,328.6" stroke="#1c44d8" stroke-width="1.4" fill="none" stroke-linejoin="round"/><path d="M549.8,318.8V241.9L566.1,259.9V334.4L549.8,318.8M557.1,326.0L560.1,336.4L563.1,325.9" stroke="#0a2288" stroke-width="2.9" fill="none" stroke-linejoin="round"/><path d="M549.8,318.8V241.9L566.1,259.9V334.4L549.8,318.8M557.1,326.0L560.1,336.4L563.1,325.9" stroke="#1c44d8" stroke-width="1.4" fill="none" stroke-linejoin="round"/><path d="M565.1,316.2V239.1L581.4,257.2V331.7L565.1,316.2M572.4,323.3L575.4,333.8L578.4,323.3" stroke="#0a2288" stroke-width="2.9" fill="none" stroke-linejoin="round"/><path d="M565.1,316.2V239.1L581.4,257.2V331.7L565.1,316.2M572.4,323.3L575.4,333.8L578.4,323.3" stroke="#1c44d8" stroke-width="1.4" fill="none" stroke-linejoin="round"/><path d="M580.4,313.6V236.3L596.7,254.6V329.1L580.4,313.6M587.7,320.6L590.7,331.1L593.7,320.6" stroke="#0a2288" stroke-width="2.9" fill="none" stroke-linejoin="round"/><path d="M580.4,313.6V236.3L596.7,254.6V329.1L580.4,313.6M587.7,320.6L590.7,331.1L593.7,320.6" stroke="#1c44d8" stroke-width="1.4" fill="none" stroke-linejoin="round"/><path d="M595.7,311.0V233.5L612.0,251.9V326.4L595.7,311.0M603.0,318.0L606.0,328.5L609.0,317.9" stroke="#0a2288" stroke-width="2.9" fill="none" stroke-linejoin="round"/><path d="M595.7,311.0V233.5L612.0,251.9V326.4L595.7,311.0M603.0,318.0L606.0,328.5L609.0,317.9" stroke="#1c44d8" stroke-width="1.4" fill="none" stroke-linejoin="round"/><path d="M611.0,308.4V230.7L627.3,249.2V323.7L611.0,308.4M618.3,315.3L621.3,325.8L624.3,315.3" stroke="#0a2288" stroke-width="2.9" fill="none" stroke-linejoin="round"/><path d="M611.0,308.4V230.7L627.3,249.2V323.7L611.0,308.4M618.3,315.3L621.3,325.8L624.3,315.3" stroke="#1c44d8" stroke-width="1.4" fill="none" stroke-linejoin="round"/><path d="M626.4,305.7V227.9L642.7,246.6V321.1L626.4,305.7M633.7,312.6L636.7,323.1L639.7,312.6" stroke="#0a2288" stroke-width="2.9" fill="none" stroke-linejoin="round"/><path d="M626.4,305.7V227.9L642.7,246.6V321.1L626.4,305.7M633.7,312.6L636.7,323.1L639.7,312.6" stroke="#1c44d8" stroke-width="1.4" fill="none" stroke-linejoin="round"/><path d="M641.7,303.1V225.1L658.0,243.9V318.4L641.7,303.1M649.0,310.0L652.0,320.5L655.0,309.9" stroke="#0a2288" stroke-width="2.9" fill="none" stroke-linejoin="round"/><path d="M641.7,303.1V225.1L658.0,243.9V318.4L641.7,303.1M649.0,310.0L652.0,320.5L655.0,309.9" stroke="#1c44d8" stroke-width="1.4" fill="none" stroke-linejoin="round"/><path d="M657.0,300.5V222.3L673.3,241.2V315.7L657.0,300.5M664.3,307.3L667.3,317.8L670.3,307.3" stroke="#0a2288" stroke-width="2.9" fill="none" stroke-linejoin="round"/><path d="M657.0,300.5V222.3L673.3,241.2V315.7L657.0,300.5M664.3,307.3L667.3,317.8L670.3,307.3" stroke="#1c44d8" stroke-width="1.4" fill="none" stroke-linejoin="round"/><path d="M672.3,297.9V219.5L688.6,238.6V313.1L672.3,297.9M679.6,304.6L682.6,315.1L685.6,304.6" stroke="#0a2288" stroke-width="2.9" fill="none" stroke-linejoin="round"/><path d="M672.3,297.9V219.5L688.6,238.6V313.1L672.3,297.9M679.6,304.6L682.6,315.1L685.6,304.6" stroke="#1c44d8" stroke-width="1.4" fill="none" stroke-linejoin="round"/><path d="M687.6,295.3V216.7L703.9,235.9V310.4L687.6,295.3M694.9,302.0L697.9,312.5L700.9,301.9" stroke="#0a2288" stroke-width="2.9" fill="none" stroke-linejoin="round"/><path d="M687.6,295.3V216.7L703.9,235.9V310.4L687.6,295.3M694.9,302.0L697.9,312.5L700.9,301.9" stroke="#1c44d8" stroke-width="1.4" fill="none" stroke-linejoin="round"/><path d="M703.0,292.6V213.9L719.3,233.2V307.7L703.0,292.6M710.3,299.3L713.3,309.8L716.3,299.3" stroke="#0a2288" stroke-width="2.9" fill="none" stroke-linejoin="round"/><path d="M703.0,292.6V213.9L719.3,233.2V307.7L703.0,292.6M710.3,299.3L713.3,309.8L716.3,299.3" stroke="#1c44d8" stroke-width="1.4" fill="none" stroke-linejoin="round"/><path d="M718.3,290.0V211.1L734.6,230.6V305.1L718.3,290.0M725.6,296.6L728.6,307.1L731.6,296.6" stroke="#0a2288" stroke-width="2.9" fill="none" stroke-linejoin="round"/><path d="M718.3,290.0V211.1L734.6,230.6V305.1L718.3,290.0M725.6,296.6L728.6,307.1L731.6,296.6" stroke="#1c44d8" stroke-width="1.4" fill="none" stroke-linejoin="round"/><polygon points="718.3,210.7 734.6,230 734.6,304 718.3,289.7" fill="#3a5ac8" opacity=".22"/><circle cx="718.3" cy="210.7" r="2.4" fill="#4a78e8"/><circle cx="734.6" cy="230" r="2.4" fill="#4a78e8"/><circle cx="718.3" cy="289.7" r="2.4" fill="#4a78e8"/><circle cx="734.6" cy="304" r="2.4" fill="#4a78e8"/><circle cx="722" cy="236" r="2.4" fill="#4a78e8"/><circle cx="726" cy="266" r="2.4" fill="#4a78e8"/><circle cx="738" cy="262" r="2.4" fill="#4a78e8"/><circle cx="728" cy="293" r="2.4" fill="#4a78e8"/><rect x="811" y="235" width="22" height="85" rx="3" fill="#3c3c3c" stroke="#555"/><circle cx="822" cy="258" r="7.5" fill="#9a9a9a"/><circle cx="822" cy="258" r="4.5" fill="#666"/><circle cx="822" cy="258" r="2.5" fill="#8a8a8a"/><rect x="817" y="283" width="8" height="8" fill="#5a9a4a"/><circle cx="825" cy="291" r="2.5" fill="#bbb"/><path d="M826 241l3 2-3 2M828 314l2 2" stroke="#aaa" fill="none"/><path d="M800 131h8" stroke="#fff" stroke-width="2"/><rect x="812" y="126" width="7" height="7" fill="none" stroke="#fff" stroke-width="1.4"/><path d="M823 126l7 8M830 126l-7 8" stroke="#fff" stroke-width="1.8"/></svg>
<div class="a" style="left:165px;top:119px;width:672px;height:3px;background:#15e8f8"></div>
<div class="a" style="left:165px;top:118px;width:3px;height:389px;background:#15e8f8"></div>
<div class="a" style="left:834px;top:118px;width:3px;height:389px;background:#15e8f8"></div>
<div class="a" style="left:165px;top:505px;width:672px;height:3px;background:#15e8f8"></div>
<div class="a" style="left:167px;top:121px;width:77px;height:14px;background:#15e8f8"></div>
<div class="t" style="left:168px;top:121px;font-size:14px;color:#000;font-weight:bold;-webkit-text-stroke:.6px #000"><span class="c">临时隐藏</span>/<span class="c">隔离</span></div>
<div class="a" style="left:837px;top:118px;width:16px;height:389px;background:linear-gradient(90deg,#e8e8e8,#f6f6f6)"></div>
<svg class="a" style="left:840px;top:124px;" width="9" height="6" viewBox="0 0 9 6"><path d="M1 5l3.5-4 3.5 4z" fill="#444"/></svg>
<div class="a" style="left:841px;top:309px;width:8px;height:11px;background:linear-gradient(90deg,#fafafa,#d8d8d8);border:1px solid #9a9a9a"></div>
<svg class="a" style="left:840px;top:499px;" width="9" height="6" viewBox="0 0 9 6"><path d="M1 1h7l-3.5 4z" fill="#444"/></svg>
<div class="a" style="left:853px;top:118px;width:165px;height:404px;background:#fff"></div>
<div class="a" style="left:853px;top:118px;width:2px;height:404px;background:#8a8a8a"></div>
<div class="a" style="left:855px;top:118px;width:163px;height:15px;background:linear-gradient(#cdd8e4,#bccadb)"></div>
<div class="a" style="left:855px;top:133px;width:163px;height:1px;background:#8b98a8"></div>
<div class="t" style="left:857px;top:121px;font-size:11px;color:#3a3a3a;"><span class="c">项目浏览器</span> - <span class="c">项目</span>1</div>
<div class="t" style="left:1005px;top:118px;font-size:14px;color:#222;font-weight:bold">&#215;</div>
<div class="a" style="left:855px;top:134px;width:163px;height:388px;border-left:2px solid #c0c0c0"></div>
<div class="l">
<div class="a" style="left:885px;top:135px;width:48px;height:14px;background:#e2e2e2"></div>
<svg class="a" style="left:859px;top:138px;" width="9" height="9" viewBox="0 0 9 9"><path d="M1 1.5h7M1 4.5h7M1 7.5h7" stroke="#6a7390" stroke-width="1"/></svg>
<div class="t" style="left:886px;top:137px;font-size:11px;color:#111;"><span class="c">视图</span> (<span class="c">全部</span>)</div>
<svg class="a" style="left:870px;top:136px;" width="14" height="12" viewBox="0 0 14 12"><path d="M2 2h-1v8h1M11 2h1v8h-1" stroke="#333" fill="none"/><path d="M4 5a3 3 0 1 1 0 2" stroke="#333" fill="none"/></svg>
<svg class="a" style="left:873px;top:153px;" width="9" height="9" viewBox="0 0 9 9"><path d="M1 1.5h7M1 4.5h7M1 7.5h7" stroke="#6a7390" stroke-width="1"/></svg>
<div class="a" style="left:881px;top:157px;width:8px;height:1px;border-top:1px dotted #888"></div>
<div class="t" style="left:890px;top:152px;font-size:11px;color:#111;"><span class="c">结构平面</span></div>
<div class="a" style="left:893px;top:172px;width:11px;height:1px;border-top:1px dotted #888"></div>
<div class="t" style="left:905px;top:167px;font-size:11px;color:#111;"><span class="c">场地</span></div>
<div class="a" style="left:893px;top:187px;width:11px;height:1px;border-top:1px dotted #888"></div>
<div class="t" style="left:905px;top:182px;font-size:11px;color:#111;"><span class="c">标高</span> 1</div>
<div class="a" style="left:893px;top:202px;width:11px;height:1px;border-top:1px dotted #888"></div>
<div class="t" style="left:905px;top:197px;font-size:11px;color:#111;"><span class="c">标高</span> 1 - <span class="c">分析</span></div>
<div class="a" style="left:893px;top:217px;width:11px;height:1px;border-top:1px dotted #888"></div>
<div class="t" style="left:905px;top:212px;font-size:11px;color:#111;"><span class="c">标高</span> 2</div>
<div class="a" style="left:893px;top:232px;width:11px;height:1px;border-top:1px dotted #888"></div>
<div class="t" style="left:905px;top:227px;font-size:11px;color:#111;"><span class="c">标高</span> 2 - <span class="c">分析</span></div>
<svg class="a" style="left:873px;top:243px;" width="9" height="9" viewBox="0 0 9 9"><path d="M1 1.5h7M1 4.5h7M1 7.5h7" stroke="#6a7390" stroke-width="1"/></svg>
<div class="a" style="left:881px;top:247px;width:8px;height:1px;border-top:1px dotted #888"></div>
<div class="t" style="left:890px;top:242px;font-size:11px;color:#111;"><span class="c">三维视图</span></div>
<div class="a" style="left:893px;top:262px;width:11px;height:1px;border-top:1px dotted #888"></div>
<div class="t" style="left:905px;top:257px;font-size:11px;color:#111;">{<span class="c">三维</span>}</div>
<div class="t" style="left:905px;top:272px;font-size:11px;color:#111;"><span class="c">分析模型</span></div>
<svg class="a" style="left:873px;top:290px;" width="7" height="3" viewBox="0 0 7 3"><path d="M0 1h6" stroke="#c4c4c4" stroke-width="2"/></svg>
<div class="t" style="left:890px;top:287px;font-size:11px;color:#111;"><span class="c">立面</span> (<span class="c">建筑立面</span>)</div>
<div class="t" style="left:905px;top:302px;font-size:11px;color:#111;"><span class="c">东</span></div>
<div class="t" style="left:905px;top:317px;font-size:11px;color:#111;"><span class="c">北</span></div>
<div class="t" style="left:905px;top:332px;font-size:11px;color:#111;"><span class="c">南</span></div>
<div class="t" style="left:905px;top:347px;font-size:11px;color:#111;"><span class="c">西</span></div>
<svg class="a" style="left:873px;top:365px;" width="7" height="3" viewBox="0 0 7 3"><path d="M0 1h6" stroke="#c4c4c4" stroke-width="2"/></svg>
<div class="t" style="left:890px;top:362px;font-size:11px;color:#111;"><span class="c">剖面</span> (<span class="c">剖面</span> 1)</div>
<svg class="a" style="left:871px;top:376px;" width="14" height="12" viewBox="0 0 14 12"><rect x="1" y="1" width="11" height="10" fill="#fff" stroke="#444"/><path d="M3 4h7M3 6h7M3 8h7" stroke="#555"/><rect x="2" y="3" width="3" height="6" fill="#2a5aa8"/></svg>
<div class="t" style="left:887px;top:377px;font-size:11px;color:#111;"><span class="c">图例</span></div>
<svg class="a" style="left:871px;top:391px;" width="14" height="12" viewBox="0 0 14 12"><rect x="1" y="1" width="11" height="10" fill="#fff" stroke="#444"/><path d="M3 4h7M3 6h7M3 8h7" stroke="#555"/><rect x="2" y="3" width="3" height="6" fill="#2a5aa8"/></svg>
<div class="t" style="left:887px;top:392px;font-size:11px;color:#111;"><span class="c">明细表</span>/<span class="c">数量</span></div>
<svg class="a" style="left:871px;top:406px;" width="14" height="12" viewBox="0 0 14 12"><rect x="1" y="1" width="11" height="10" fill="#fff" stroke="#444"/><path d="M3 4h7M3 6h7M3 8h7" stroke="#555"/><rect x="2" y="3" width="3" height="6" fill="#2a5aa8"/></svg>
<div class="t" style="left:887px;top:407px;font-size:11px;color:#111;"><span class="c">图纸</span> (<span class="c">全部</span>)</div>
<svg class="a" style="left:859px;top:425px;" width="7" height="3" viewBox="0 0 7 3"><path d="M0 1h6" stroke="#bbb" stroke-width="2"/></svg>
<svg class="a" style="left:871px;top:421px;" width="14" height="12" viewBox="0 0 14 12"><rect x="1" y="1" width="11" height="10" fill="#fff" stroke="#333"/><path d="M4 3v5h5" stroke="#333" fill="none"/></svg>
<div class="t" style="left:887px;top:422px;font-size:11px;color:#111;"><span class="c">族</span></div>
<svg class="a" style="left:859px;top:440px;" width="7" height="3" viewBox="0 0 7 3"><path d="M0 1h6" stroke="#bbb" stroke-width="2"/></svg>
<svg class="a" style="left:871px;top:436px;" width="14" height="12" viewBox="0 0 14 12"><rect x="1" y="1" width="11" height="10" fill="#fff" stroke="#333"/><path d="M4 3v5h5" stroke="#333" fill="none"/></svg>
<div class="t" style="left:887px;top:437px;font-size:11px;color:#111;"><span class="c">组</span></div>
<svg class="a" style="left:871px;top:451px;" width="14" height="12" viewBox="0 0 14 12"><ellipse cx="4" cy="6" rx="4" ry="2.6" fill="none" stroke="#c8a010" stroke-width="1.6"/><ellipse cx="9" cy="6" rx="4" ry="2.6" fill="none" stroke="#c8a010" stroke-width="1.6"/></svg>
<div class="t" style="left:887px;top:452px;font-size:11px;color:#111;">Revit <span class="c">链接</span></div>
</div>
<div class="a" style="left:165px;top:508px;width:672px;height:14px;background:#fbfbfb"></div>
<div class="a" style="left:435px;top:508px;width:402px;height:14px;background:linear-gradient(#f2f2f2,#e4e4e4)"></div>
<div class="a" style="left:627px;top:508px;width:10px;height:12px;background:linear-gradient(#fafafa,#d4d4d4);border:1px solid #9a9a9a"></div>
<svg class="a" style="left:829px;top:513px;" width="6" height="7" viewBox="0 0 6 7"><path d="M1 1l4 3-4 3z" fill="#444"/></svg>
<div class="t" style="left:180px;top:509px;font-size:10px;color:#333;">·</div>
<div class="t" style="left:197px;top:509px;font-size:10px;color:#222;">·70</div>
<svg class="a" style="left:0px;top:0px;pointer-events:none" width="1018" height="541" viewBox="0 0 1018 541"><rect x="224.5" y="509.5" width="11" height="8" fill="#ddd" stroke="#444"/><path d="M225 512h10M225 515h10M228 510v7M231 510v7" stroke="#555"/><path d="M241 512l3-3h9v6l-3 3h-9z" fill="#5a8ad0" stroke="#1a4aa8"/><path d="M242 514h8" stroke="#d02020"/><path d="M242 516h8" stroke="#20a020"/><circle cx="259" cy="513" r="3.5" fill="#f4d040" stroke="#d8a020"/><path d="M255 509l2 2M263 509l-2 2M259 508v2" stroke="#d8a020"/><path d="M261 515l4 4M265 515l-4 4" stroke="#d02020" stroke-width="1.6"/><circle cx="275" cy="512" r="3.5" fill="#b8d0f0" stroke="#1a4aa8" stroke-width="1.3"/><path d="M272 517h5" stroke="#333"/><path d="M277 515l4 4M281 515l-4 4" stroke="#d02020" stroke-width="1.6"/><path d="M287 510v6M289 510v6M291 511l2 2" stroke="#777" stroke-width="1.2"/><circle cx="294" cy="515" r="2.2" fill="#fff" stroke="#2a62c0"/><path d="M302 514h2M305 510h5M306 510v8" stroke="#1a4aa8" stroke-width="1.5"/><path d="M308 512l5 5M313 512l-5 5" stroke="#d02020" stroke-width="1.6"/><path d="M317 514h2M320 510h5M321 510v8" stroke="#1a4aa8" stroke-width="1.5"/><path d="M325 511h3v3h-3v3h3" stroke="#1a4aa8" stroke-width="1.3" fill="none"/><circle cx="338" cy="513" r="4.5" fill="#eee" stroke="#333" stroke-width="1.2"/><path d="M336 512h4" stroke="#333"/><rect x="339" y="515" width="5" height="4" fill="#fff" stroke="#2a8a2a"/><rect x="349.5" y="509.5" width="11" height="9" fill="#a8c8f0" stroke="#1a4aa8"/><path d="M351 513h8M351 516h8" stroke="#333"/><path d="M371 518l-2-4a2.2 2.2 0 1 1 4 0z" fill="#fff" stroke="#2a62c0" stroke-width="1.3"/><rect x="380.5" y="510.5" width="12" height="8" rx="2" fill="#fff" stroke="#333" stroke-width="1.3"/><circle cx="384" cy="515" r="1.3" fill="#333"/><circle cx="389" cy="515" r="1.3" fill="#333"/><path d="M395 518v-7l4-2 4 2v7" fill="#fff" stroke="#333" stroke-width="1.2"/><path d="M398 512v6M401 512v6" stroke="#c03030"/><circle cx="405" cy="512" r="2.3" fill="#f4c040"/><rect x="414.5" y="512.5" width="8" height="6" fill="#eee" stroke="#444"/><path d="M416 512v-2h8v6h-2" stroke="#444" fill="none"/><rect x="427" y="508" width="13" height="13" fill="#e6e6e6"/><path d="M435 512l-3 2 3 2z" fill="#444"/></svg>
<div class="a" style="left:853px;top:507px;width:165px;height:15px;background:#fff;border-left:2px solid #8a8a8a"></div>
<div class="a" style="left:837px;top:507px;width:16px;height:15px;background:#ececec"></div>
<div class="a" style="left:0px;top:522px;width:1018px;height:19px;background:linear-gradient(#f0f0f0,#dedede)"></div>
<div class="t" style="left:-6px;top:527px;font-size:11px;color:#222;"><span class="c">结构钢筋</span> : <span class="c">钢筋</span> : 8 HPB300 : <span class="c">形状</span> 33</div>
<svg class="a" style="left:0px;top:0px;pointer-events:none" width="1018" height="541" viewBox="0 0 1018 541"><circle cx="-6" cy="522" r="14.5" fill="#3aa848" stroke="#a0d8a0" stroke-width="1.5"/><path d="M360 530h12M362 540v-7h3v7M367 540v-9h3v9" stroke="#2a62c0" stroke-width="1.5" fill="none"/><circle cx="366" cy="527" r="2.5" fill="#3aa848"/><rect x="530" y="524" width="40" height="17" fill="#e0e0e0"/><path d="M538 539l5-6M542 532h5v-4h-5zM540 535h4" stroke="#888" stroke-width="1.4" fill="none"/><path d="M553 530v6M556 530v6M559 530v6" stroke="#2a62c0" stroke-width="1.2"/><path d="M556 530v6" stroke="#e08020" stroke-width="1.2"/><rect x="576" y="526" width="12" height="12" fill="#fff" stroke="#333" stroke-width="1.2"/><path d="M578 529h8M578 532h8M578 535h8" stroke="#333"/><rect x="591" y="525" width="14" height="16" fill="#d8d8d8"/><rect x="594" y="527" width="8" height="10" fill="#888"/><rect x="853" y="524" width="16" height="17" fill="#e2e2e2"/><rect x="871" y="524" width="16" height="17" fill="#e2e2e2"/><rect x="890" y="524" width="16" height="17" fill="#e2e2e2"/><rect x="909" y="524" width="16" height="17" fill="#e2e2e2"/><rect x="929" y="524" width="16" height="17" fill="#e2e2e2"/><ellipse cx="858" cy="529" rx="3.5" ry="2" fill="none" stroke="#e0b020" stroke-width="1.6"/><ellipse cx="863" cy="529" rx="3.5" ry="2" fill="none" stroke="#e0b020" stroke-width="1.6"/><path d="M861 532l2 6M862 536l3-1" stroke="#222" stroke-width="1.2"/><path d="M875 530h9M874 533h9M875 536h9" stroke="#2a62c0" stroke-width="1.4"/><path d="M881 528l5 5-3 0 1 4" stroke="#333" fill="#fff"/><rect x="893" y="526" width="7" height="7" fill="#f4b050" stroke="#d04020"/><path d="M896 533v6" stroke="#d04020" stroke-width="1.4"/><path d="M900 532l4 4-2 0 1 3" stroke="#333" fill="#fff"/><path d="M912 529l7-3v12l-7 2z" fill="#a8c8f0" stroke="#2a62c0" stroke-width="1.2"/><path d="M920 525l4 4M924 525l-4 4" stroke="#e02020" stroke-width="1.8"/><path d="M921 535l2 3" stroke="#333"/><path d="M933 527h6M936 524v6" stroke="#222" stroke-width="1.4"/><path d="M937 529l5 5-2 0 1 4" stroke="#222" fill="#fff" stroke-width="1.1"/><path d="M949 527h12l-4.5 5v6l-3-1.5v-4.5z" fill="#eee" stroke="#555" stroke-width="1.3"/><path d="M963 533v1M963 537v1" stroke="#e08020" stroke-width="1.3"/><path d="M966 532v7" stroke="#2a62c0" stroke-width="1.2"/></svg>
<div class="t" style="left:3px;top:516px;font-size:10px;color:#fff;font-weight:bold">5</div>
<div class="a" style="left:376px;top:525px;width:154px;height:16px;background:#fff;border:1px solid #e0e0e0"></div>
<svg class="a" style="left:521px;top:531px;" width="7" height="4" viewBox="0 0 7 4"><path d="M0 0h6l-3 4z" fill="#999"/></svg>
<div class="a" style="left:612px;top:524px;width:118px;height:17px;background:#fff;border:1px solid #d4d4d4"></div>
<div class="t" style="left:615px;top:527px;font-size:11px;color:#333;"><span class="c">主模型</span></div>
<svg class="a" style="left:717px;top:531px;" width="7" height="4" viewBox="0 0 7 4"><path d="M0 0h6l-3 4z" fill="#999"/></svg>
<div class="a" style="left:-4px;top:115px;width:171px;height:392px;border:3.5px solid #f03636"></div>
<div class="a" style="left:236px;top:175px;width:524px;height:225px;border:3px solid #f03636"></div>
</body></html>
